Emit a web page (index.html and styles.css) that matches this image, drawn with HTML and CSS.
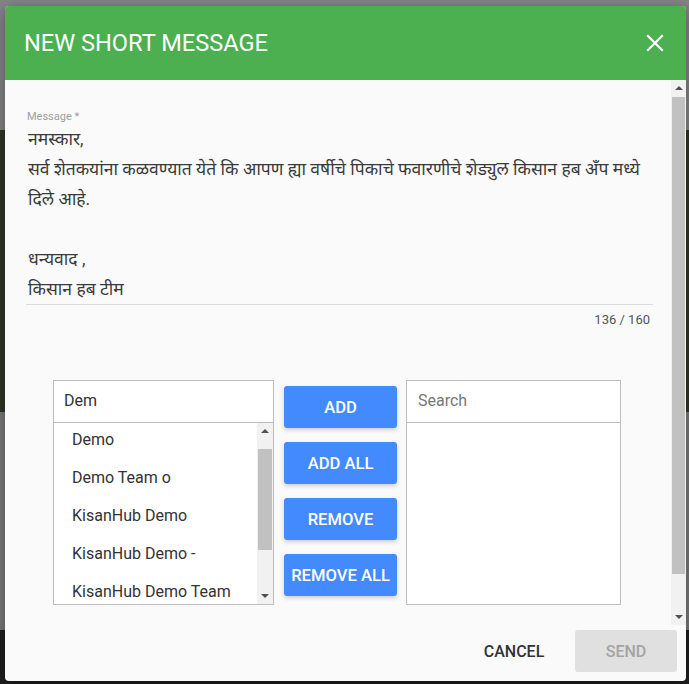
FILE: index.html
```html
<!DOCTYPE html>
<html lang="mr">
<head>
<meta charset="utf-8">
<title>New Short Message</title>
<link rel="stylesheet" href="styles.css">
</head>
<body>
<div class="dialog">
  <header class="dialog-header">
    <h1 class="dialog-title">NEW SHORT MESSAGE</h1>
    <button class="close-btn" aria-label="Close">
      <svg width="18" height="18" viewBox="0 0 18 18"><path d="M2 2 L16 16 M16 2 L2 16" stroke="#fff" stroke-width="2.2" stroke-linecap="square"/></svg>
    </button>
  </header>
  <div class="dialog-body">
    <div class="body-content">
      <div class="field">
        <label class="field-label">Message *</label>
        <div class="message-text">
          <div class="line">नमस्कार,</div>
          <div class="line">सर्व शेतकयांना कळवण्यात येते कि आपण ह्या वर्षीचे पिकाचे फवारणीचे शेड्युल किसान हब अँप मध्ये</div>
          <div class="line">दिले आहे.</div>
          <div class="line">&nbsp;</div>
          <div class="line">धन्यवाद ,</div>
          <div class="line">किसान हब टीम</div>
        </div>
        <div class="counter">136 / 160</div>
      </div>
      <div class="dual-list">
        <div class="list-box left">
          <div class="list-search">Dem</div>
          <div class="list-body">
            <ul class="list-items">
              <li>Demo</li>
              <li>Demo Team o</li>
              <li>KisanHub Demo</li>
              <li>KisanHub Demo -</li>
              <li>KisanHub Demo Team</li>
            </ul>
            <div class="mini-scroll">
              <span class="arrow up"></span>
              <div class="mini-track"><div class="mini-thumb"></div></div>
              <span class="arrow down"></span>
            </div>
          </div>
        </div>
        <div class="actions">
          <button class="btn-blue">ADD</button>
          <button class="btn-blue">ADD ALL</button>
          <button class="btn-blue">REMOVE</button>
          <button class="btn-blue">REMOVE ALL</button>
        </div>
        <div class="list-box right">
          <div class="list-search placeholder">Search</div>
          <div class="list-body"></div>
        </div>
      </div>
    </div>
    <div class="body-scroll">
      <span class="arrow up"></span>
      <div class="body-track"><div class="body-thumb"></div></div>
      <span class="arrow down"></span>
    </div>
  </div>
  <footer class="dialog-footer">
    <button class="btn-flat">CANCEL</button>
    <button class="btn-disabled">SEND</button>
  </footer>
</div>
</body>
</html>
```

FILE: styles.css
```css
* { box-sizing: border-box; }
html, body { margin: 0; padding: 0; }
body {
  width: 689px;
  height: 684px;
  overflow: hidden;
  font-family: Roboto, "Noto Sans", "Liberation Sans", sans-serif;
  background: linear-gradient(to bottom, #858585 0, #858585 130px, #2f3526 130px, #2f3526 412px, #7a7a7a 412px, #7a7a7a 630px, #1f1f1f 630px);
  padding: 6px 3px 0 5px;
}
.dialog {
  width: 681px;
  height: 675px;
  background: #fafafa;
  border-radius: 4px;
  overflow: hidden;
  display: flex;
  flex-direction: column;
  box-shadow: 0 4px 16px rgba(0,0,0,0.4);
}
.dialog-header {
  height: 74px;
  flex: none;
  background: #4caf50;
  display: flex;
  align-items: center;
  justify-content: space-between;
  padding: 0 19px 0 19px;
}
.dialog-title {
  margin: 0;
  color: #fff;
  font-weight: 400;
  font-size: 23.6px;
  letter-spacing: 0;
}
.close-btn {
  background: none;
  border: 0;
  padding: 0;
  width: 24px;
  height: 24px;
  display: flex;
  align-items: center;
  justify-content: center;
}
.dialog-body {
  flex: 1;
  display: flex;
  min-height: 0;
}
.body-content {
  flex: 1;
  padding: 30px 18px 0 21px;
}
.field-label {
  display: block;
  font-size: 11px;
  line-height: 14px;
  color: #9e9e9e;
  padding-left: 1px;
}
.message-text {
  border-bottom: 1px solid #dcdcdc;
  font-size: 17.5px;
  line-height: 30px;
  color: #3a3a3a;
  padding-left: 2px;
}
.counter {
  text-align: right;
  font-size: 13px;
  line-height: 30px;
  color: #555;
  padding-right: 3px;
}
.dual-list {
  display: flex;
  margin: 45px 0 0 27px;
}
.list-box {
  border: 1px solid #bdbdbd;
  background: #fff;
  display: flex;
  flex-direction: column;
}
.list-box.left { width: 221px; }
.list-box.right { width: 215px; margin-left: 9px; }
.list-search {
  height: 42px;
  line-height: 40px;
  border-bottom: 1px solid #bdbdbd;
  padding-left: 10px;
  font-size: 16px;
  color: #333;
}
.list-search.placeholder { color: #777; padding-left: 11px; }
.list-body {
  height: 181px;
  display: flex;
}
.list-items {
  flex: 1;
  list-style: none;
  margin: 0;
  padding: 0;
  overflow: hidden;
}
.list-items li {
  height: 38px;
  line-height: 34px;
  padding-left: 18px;
  font-size: 16px;
  color: #333;
  white-space: nowrap;
}
.mini-scroll, .body-scroll {
  width: 16px;
  flex: none;
  background: #f1f1f1;
  display: flex;
  flex-direction: column;
  align-items: center;
}
.mini-scroll { padding: 6px 0 6px; }
.body-scroll { width: 15px; padding: 6px 0 6px; }
.arrow {
  width: 0;
  height: 0;
  border-left: 4px solid transparent;
  border-right: 4px solid transparent;
  flex: none;
}
.arrow.up { border-bottom: 4px solid #505050; margin-bottom: 7px; }
.arrow.down { border-top: 4px solid #505050; margin-top: 7px; }
.mini-track, .body-track {
  flex: 1;
  width: 100%;
  padding: 0 1px;
}
.mini-thumb {
  margin-top: 9px;
  height: 101px;
  background: #c1c1c1;
}
.body-thumb {
  margin-top: 0;
  height: 477px;
  background: #c1c1c1;
}
.actions {
  display: flex;
  flex-direction: column;
  gap: 14px;
  margin: 6px 0 0 10px;
}
.btn-blue {
  width: 113px;
  height: 42px;
  border: 0;
  border-radius: 3px;
  background: #448aff;
  color: #fff;
  font-family: Roboto, "Liberation Sans", sans-serif;
  font-weight: 500;
  font-size: 16.6px;
  padding: 0;
  box-shadow: 0 2px 4px rgba(0,0,0,0.18);
}
.dialog-footer {
  height: 56px;
  flex: none;
  display: flex;
  justify-content: flex-end;
  align-items: flex-start;
  gap: 10px;
  padding: 5px 9px 0 0;
}
.btn-flat, .btn-disabled {
  width: 102px;
  height: 42px;
  border: 0;
  border-radius: 3px;
  font-family: Roboto, "Liberation Sans", sans-serif;
  font-weight: 500;
  font-size: 16px;
  padding: 0;
}
.btn-flat { background: transparent; color: #333; }
.btn-disabled { background: #e0e0e0; color: #a4a4a4; }
```
